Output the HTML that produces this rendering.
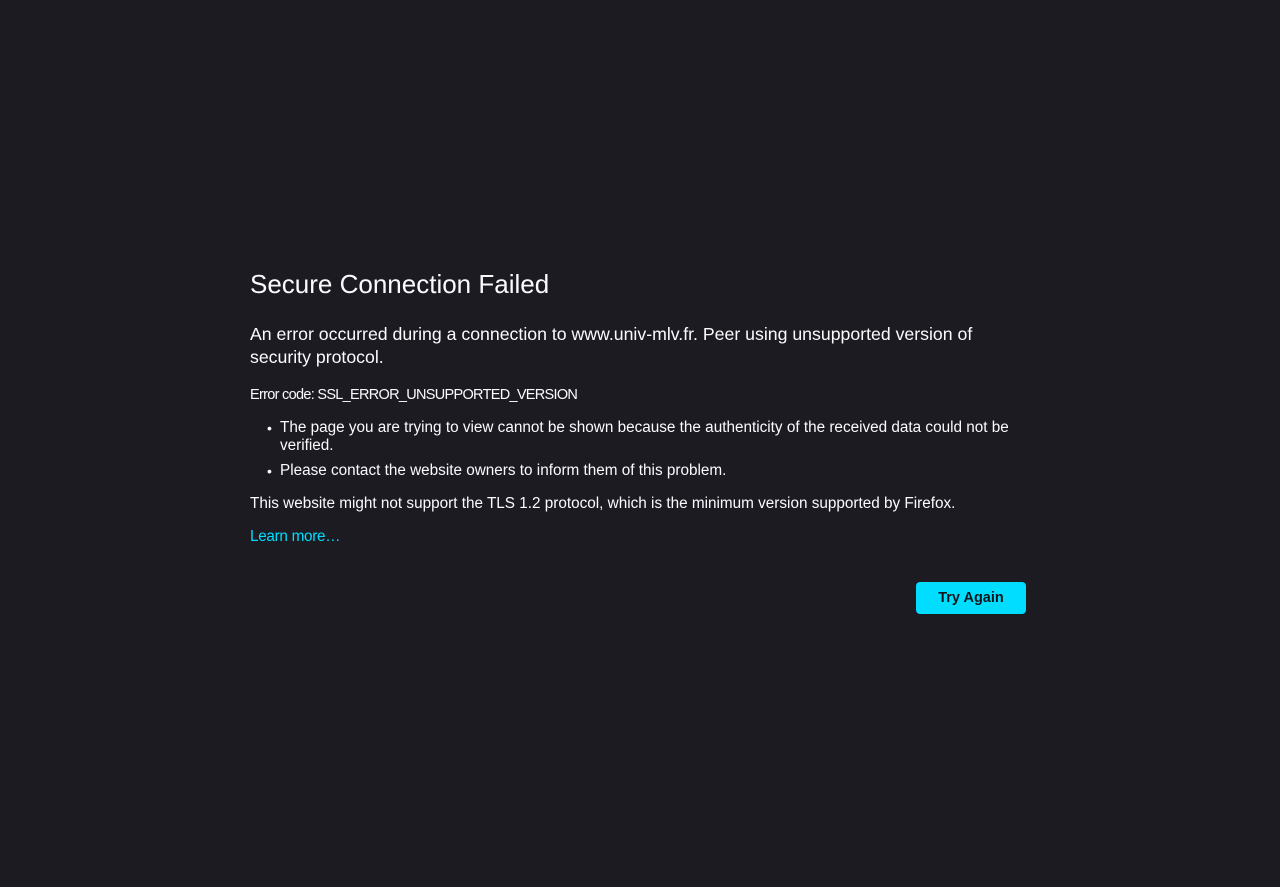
<!DOCTYPE html>
<html><head><style>
html,body{margin:0;background:#1c1b22;color:#fbfbfe;font-family:"Liberation Sans",sans-serif;width:1280px;height:887px;overflow:hidden}
.a{position:absolute;left:250px;white-space:nowrap}
h1{font-weight:300;font-size:26px;margin:0}
.i{font-size:17.7px;line-height:23px}
.s{font-size:15.3px}
.b{position:absolute;left:267px;font-size:14px}
a{color:#00ddff;text-decoration:none}
.btn{position:absolute;left:916px;top:582px;width:110px;height:32px;background:#00ddff;color:#15141a;border-radius:4px;font-weight:bold;font-size:14.5px;text-align:center;line-height:32px}
</style></head><body>
<div class="a" style="top:269px"><h1>Secure Connection Failed</h1></div>
<div class="a i" style="top:323px">An error occurred during a connection to www.univ-mlv.fr. Peer using unsupported version of<br>security protocol.</div>
<div class="a s" style="top:387px;font-size:14.5px;letter-spacing:-0.7px">Error code: SSL_ERROR_UNSUPPORTED_VERSION</div>
<div class="b" style="top:420px">•</div>
<div class="a s" style="left:280px;top:419px;line-height:18px">The page you are trying to view cannot be shown because the authenticity of the received data could not be<br>verified.</div>
<div class="b" style="top:463px">•</div>
<div class="a s" style="left:280px;top:462px">Please contact the website owners to inform them of this problem.</div>
<div class="a s" style="top:495px">This website might not support the TLS 1.2 protocol, which is the minimum version supported by Firefox.</div>
<div class="a s" style="top:528px;letter-spacing:-0.3px"><a>Learn more…</a></div>
<div class="btn">Try Again</div>
</body></html>
